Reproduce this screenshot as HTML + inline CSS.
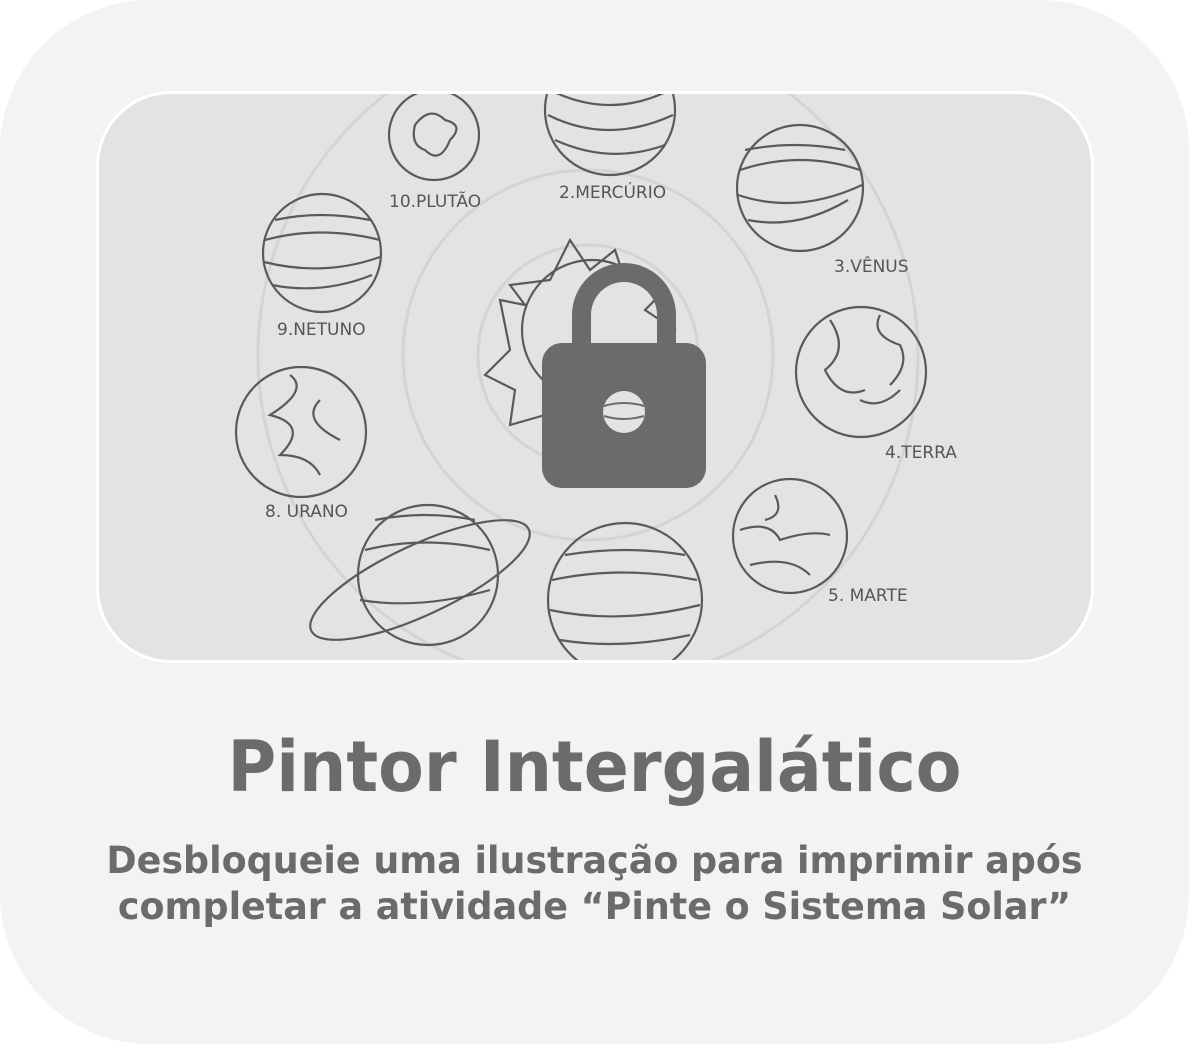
<!DOCTYPE html>
<html><head><meta charset="utf-8"><style>
body{margin:0;background:#fff;width:1189px;height:1044px;overflow:hidden;font-family:"DejaVu Sans","Liberation Sans",sans-serif}
.card{position:absolute;left:0;top:0;width:1189px;height:1044px;background:#f4f2f3;border-radius:150px}
.img{position:absolute;left:96px;top:91px;width:992px;height:566px;background:#e2e4e4;border:3px solid #fff;border-radius:75px;overflow:hidden}
h1{position:absolute;left:0;width:1189px;top:726px;margin:0;text-align:center;font-size:70px;font-weight:bold;color:#6b6b6b;transform:scaleX(0.95);transform-origin:594px 0}
p{position:absolute;left:0;width:1189px;top:838px;margin:0;text-align:center;font-size:37px;font-weight:bold;color:#6b6b6b;line-height:46px;transform:scaleX(0.985);transform-origin:594px 0}
</style></head><body>
<div class="card"></div>
<div class="img">
<svg width="992" height="566" viewBox="99 94 992 566" xmlns="http://www.w3.org/2000/svg" font-family="DejaVu Sans, sans-serif" font-size="17" fill="#555">
<g fill="none" stroke="#d3d5d5" stroke-width="3">
<circle cx="588" cy="355" r="110"/><circle cx="588" cy="355" r="185"/><circle cx="588" cy="355" r="330"/>
</g>
<g fill="none" stroke="#5a5a5a" stroke-width="2.2">
<circle cx="434" cy="135" r="45"/><path d="M415 125q15-20 30-5q20 5 5 20q-10 25-25 10q-15-5-10-25z"/>
<circle cx="610" cy="110" r="65"/><path d="M550 90q60 30 120 0M548 115q60 30 125 0M555 140q55 25 110 5"/>
<circle cx="800" cy="188" r="63"/><path d="M740 170q60-20 120 0M738 195q60 20 124-10M748 220q50 10 100-20M745 150q50-10 100 0"/>
<circle cx="322" cy="253" r="59"/><path d="M265 240q55-15 115 0M264 262q60 15 116-5M272 285q50 10 100-10M275 220q45-10 95 0"/>
<circle cx="861" cy="372" r="65"/><path d="M830 320q20 30-5 50q15 30 40 20M880 315q-10 20 20 30q10 20-10 40M860 400q20 10 40-10"/>
<circle cx="301" cy="432" r="65"/><path d="M290 375q20 15-20 40q40 10 10 40q30 0 40 20M320 400q-20 20 20 40"/>
<circle cx="790" cy="536" r="57"/><path d="M740 530q30-10 40 10q30-10 50-5M750 565q40-10 60 10M775 495q10 20-10 25"/>
<circle cx="428" cy="575" r="70"/><ellipse cx="420" cy="580" rx="120" ry="35" transform="rotate(-25 420 580)"/><path d="M365 550q60-15 125 0M360 600q60 10 130-10M375 520q50-10 100 0"/>
<circle cx="625" cy="600" r="77"/><path d="M552 580q70-15 145 0M550 610q70 15 150-5M560 640q60 10 130-5M565 555q60-10 120 0"/>
<circle cx="592" cy="330" r="70"/>
<path d="M500 300l25 5l-15-20l40-5l20-40l20 30l25-20l10 30l40 10l-20 20l30 20l-30 30l20 40l-40 0l-10 35l-30-20l-20 30l-20-30l-35 10l5-35l-30-15l25-25z"/>
</g>
<g fill="#555">
<text x="389" y="207">10.PLUTÃO</text><text x="559" y="198">2.MERCÚRIO</text><text x="834" y="272">3.VÊNUS</text>
<text x="277" y="335">9.NETUNO</text><text x="885" y="458">4.TERRA</text><text x="265" y="517">8. URANO</text><text x="828" y="601">5. MARTE</text>
</g>
<path fill="#6b6b6b" d="M572 343v-28a52 52 0 0 1 104 0v28h-19v-28a33 33 0 0 0-66 0v28z"/>
<rect x="542" y="343" width="164" height="145" rx="20" fill="#6b6b6b"/>
<circle cx="624" cy="412" r="21" fill="#e2e4e4"/>
<path d="M604 406q20-6 40 0M604 416q20 6 40 0" stroke="#6b6b6b" stroke-width="2" fill="none"/>
</svg>
</div>
<h1>Pintor Intergalático</h1>
<p>Desbloqueie uma ilustração para imprimir após<br>completar a atividade “Pinte o Sistema Solar”</p>
</body></html>
